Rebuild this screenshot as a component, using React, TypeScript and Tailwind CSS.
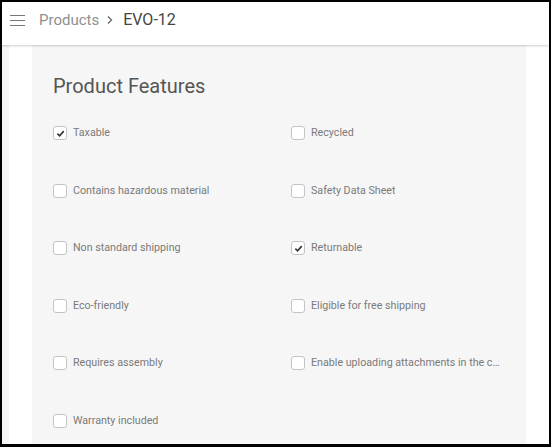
import React from "react";

const features: { label: string; checked: boolean }[] = [
  { label: "Taxable", checked: true },
  { label: "Recycled", checked: false },
  { label: "Contains hazardous material", checked: false },
  { label: "Safety Data Sheet", checked: false },
  { label: "Non standard shipping", checked: false },
  { label: "Returnable", checked: true },
  { label: "Eco-friendly", checked: false },
  { label: "Eligible for free shipping", checked: false },
  { label: "Requires assembly", checked: false },
  { label: "Enable uploading attachments in the cart", checked: false },
  { label: "Warranty included", checked: false },
];

function Checkbox({ checked }: { checked: boolean }) {
  return (
    <span className="flex h-[14px] w-[14px] shrink-0 items-center justify-center rounded-[3px] border border-[#c4c4c4] bg-white">
      {checked && (
        <svg width="9" height="9" viewBox="0 0 10 10">
          <path d="M1.5 5.2 L4 7.6 L8.6 2.4" fill="none" stroke="#333" strokeWidth="1.8" />
        </svg>
      )}
    </span>
  );
}

export default function App() {
  return (
    <div
      className="flex h-[447px] w-[551px] flex-col overflow-hidden border-[#000] border-t-2 border-x-2 border-b-[3px] bg-white"
      style={{ fontFamily: "Roboto, 'Liberation Sans', sans-serif" }}
    >
      {/* Header */}
      <header className="relative z-10 flex h-[43px] shrink-0 items-center bg-white pb-[7px] shadow-[0_1px_2px_rgba(0,0,0,0.2)]">
        <button className="ml-[8px] flex h-[16px] w-[16px] flex-col justify-center gap-[4px]">
          <span className="h-[1px] w-[15px] bg-[#777]" />
          <span className="h-[1px] w-[15px] bg-[#777]" />
          <span className="h-[1px] w-[15px] bg-[#777]" />
        </button>
        <span className="ml-[13px] text-[15px] text-[#8f8f8f]">Products</span>
        <svg className="ml-[7px]" width="8" height="10" viewBox="0 0 8 10">
          <path d="M2 1.5 L5.5 5 L2 8.5" fill="none" stroke="#666" strokeWidth="1.3" />
        </svg>
        <span className="ml-[9px] text-[16px] text-[#444]">EVO-12</span>
      </header>

      {/* Body */}
      <div className="flex flex-1 min-h-0">
        <div className="w-[7px] shrink-0 bg-[#f5f5f5]" />
        <div className="w-[23px] shrink-0 bg-white" />
        <div className="w-[494px] shrink-0 bg-[#f6f6f6] pl-[21px] pr-[26px] pt-[29px]">
          <h2 className="text-[20px] leading-[24px] text-[#555]">Product Features</h2>
          <div className="mt-[26px] grid grid-cols-2 gap-x-[29px] gap-y-[39.6px]">
            {features.map((f) => (
              <label key={f.label} className="flex h-[18px] min-w-0 items-center gap-[6px] text-[10.7px] text-[#7a7a7a]">
                <Checkbox checked={f.checked} />
                <span className="truncate">{f.label}</span>
              </label>
            ))}
          </div>
        </div>
        <div className="flex-1 bg-white" />
      </div>
    </div>
  );
}
